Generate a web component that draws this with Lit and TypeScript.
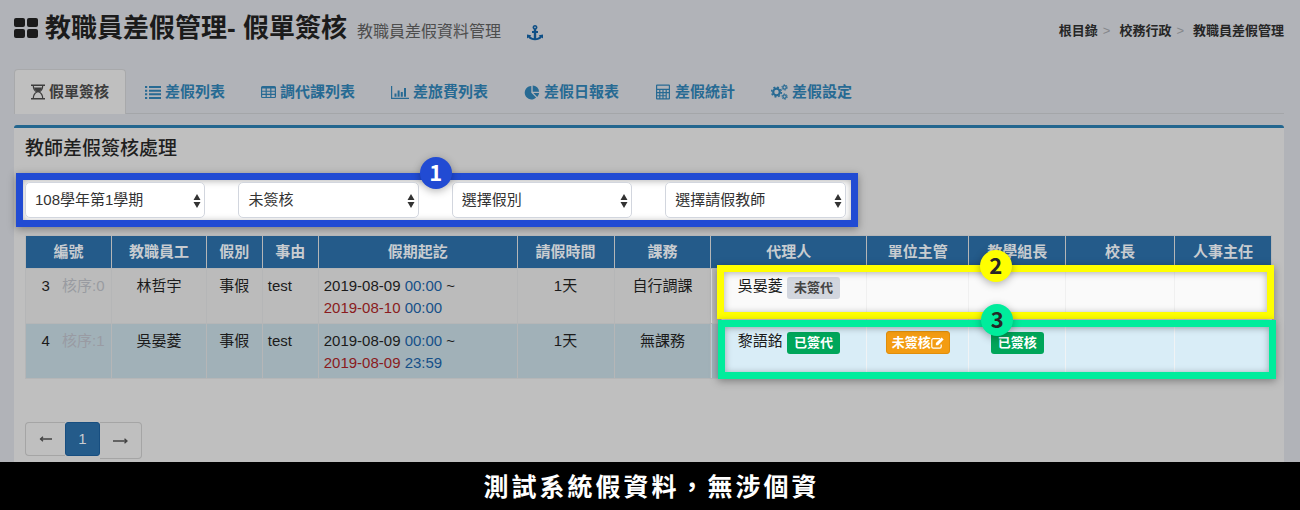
import { LitElement, html, css, svg } from "lit";
import { customElement, property } from "lit/decorators.js";

const icons: Record<string, { w: number; h: number; body: unknown }> = {
  grid: {
    w: 24, h: 20,
    body: svg`<rect x="0" y="0" width="11" height="9" rx="2"/><rect x="13" y="0" width="11" height="9" rx="2"/><rect x="0" y="11" width="11" height="9" rx="2"/><rect x="13" y="11" width="11" height="9" rx="2"/>`,
  },
  anchor: {
    w: 16, h: 16,
    body: svg`<path fill-rule="evenodd" d="M8 0a2.4 2.4 0 0 1 1.2 4.5V6H11v1.9H9.2v5.3c1.5-.2 2.8-.9 3.5-1.9l-1-1.1 4.3-.8v4.1l-1.3-1.1C13.300 14.100 10.800 15.200 8 15.200S2.700 14.100 1.300 12.400L0 13.500V9.400l4.300.8-1 1.100c.7 1 2 1.700 3.500 1.900V7.900H5V6h1.800V4.500A2.400 2.400 0 0 1 8 0zm0 1.600a.8.8 0 1 0 0 1.600.8.8 0 0 0 0-1.600z"/>`,
  },
  hourglass: {
    w: 14, h: 16,
    body: svg`<path d="M0 .5h14v1.500H0zM0 14h14v1.500H0z"/><path d="M2.300 1.500C2.300 5 4 7 5.800 8 4 9 2.300 11 2.300 14.500M11.700 1.500C11.700 5 10 7 8.200 8 10 9 11.700 11 11.700 14.500" fill="none" stroke="currentColor" stroke-width="1.200"/><path d="M3 3.500h8C10.500 5.500 9 7.300 7.600 8.200H6.400C5 7.300 3.500 5.500 3 3.500z"/>`,
  },
  list: {
    w: 16, h: 14,
    body: svg`<path d="M0 1h2.200v2H0zM4 1h12v2H4zM0 4.700h2.200v2H0zM4 4.700h12v2H4zM0 8.300h2.200v2H0zM4 8.300h12v2H4zM0 12h2.200v2H0zM4 12h12v2H4z"/>`,
  },
  table: {
    w: 15, h: 14,
    body: svg`<path fill-rule="evenodd" d="M1.500 1h12A1.500 1.500 0 0 1 15 2.500v9a1.500 1.500 0 0 1-1.500 1.500h-12A1.500 1.500 0 0 1 0 11.500v-9A1.500 1.500 0 0 1 1.500 1zM1.200 3.500v2.200h3.400V3.500zm4.600 0v2.200h3.400V3.500zm4.600 0v2.200h3.400V3.500zM1.200 6.800v2h3.400v-2zm4.600 0v2h3.400v-2zm4.600 0v2h3.400v-2zM1.200 9.900v2h3.400v-2zm4.600 0v2h3.400v-2zm4.600 0v2h3.400v-2z"/>`,
  },
  chart: {
    w: 18, h: 14,
    body: svg`<path d="M0 1h1.200v11.800H18V14H0zM3.500 8.500h2v3.300h-2zM6.600 5.500h2v6.300h-2zM9.800 7h2v4.800h-2zM13 3h2v8.800h-2z"/>`,
  },
  pie: {
    w: 16, h: 15,
    body: svg`<path d="M7.300 1v6.700l4.800 4.800A6.700 6.700 0 1 1 7.300 1zM8.700.500A6.500 6.500 0 0 1 15.100 6.700H8.700zM9.400 8h5.700a6.700 6.700 0 0 1-1.900 3.900z"/>`,
  },
  calc: {
    w: 16, h: 16,
    body: svg`<path fill-rule="evenodd" d="M2 .500h12a1 1 0 0 1 1 1v13a1 1 0 0 1-1 1H2a1 1 0 0 1-1-1v-13a1 1 0 0 1 1-1zM2.200 1.700v3h11.600v-3zm0 4.300v2h2V6zm3.200 0v2h2V6zm3.200 0v2h2V6zm3.200 0v2h2V6zM2.200 9.200v2h2v-2zm3.200 0v2h2v-2zm3.200 0v2h2v-2zM2.200 12.300v2h2v-2zm3.200 0v2h2v-2zm3.200 0v2h2v-2zm3.200-3.100v5.100h2V9.200z"/>`,
  },
  cogs: {
    w: 17, h: 16,
    body: svg`<g fill="none" stroke="currentColor"><circle cx="5.500" cy="8" r="3.300" stroke-width="2.200"/><circle cx="5.500" cy="8" r="4.900" stroke-width="1.500" stroke-dasharray="1.920 1.928"/><circle cx="13.600" cy="3.400" r="1.700" stroke-width="1.300"/><circle cx="13.600" cy="3.400" r="2.700" stroke-width="1" stroke-dasharray="1.400 1.427"/><circle cx="13.600" cy="12.600" r="1.700" stroke-width="1.300"/><circle cx="13.600" cy="12.600" r="2.700" stroke-width="1" stroke-dasharray="1.400 1.427"/></g>`,
  },
  edit: {
    w: 13, h: 12,
    body: svg`<path d="M9 1.700H2.200A1.400 1.400 0 0 0 .8 3.100v6.600a1.400 1.400 0 0 0 1.400 1.400h6.600a1.400 1.400 0 0 0 1.400-1.400V7.500" fill="none" stroke="currentColor" stroke-width="1.200"/><path d="M10.600.500l2 2L7 8.200H4.900V6.100z"/>`,
  },
  updown: {
    w: 8, h: 14,
    body: svg`<path d="M4 0l3.500 6H.500zM4 14L.500 8h7z"/>`,
  },
  left: {
    w: 14, h: 8,
    body: svg`<path d="M1 4H13M4 1.700L1.500 4 4 6.300" fill="none" stroke="currentColor" stroke-width="1.300"/>`,
  },
  right: {
    w: 16, h: 8,
    body: svg`<path d="M0 4h14M11.500 1.700L14 4l-2.500 2.300" fill="none" stroke="currentColor" stroke-width="1.300"/>`,
  },
};

@customElement("ui-icon")
export class UiIcon extends LitElement {
  @property() name = "grid";

  static styles = css`
    :host { display: inline-flex; flex: none; }
    svg { display: block; fill: currentColor; }
  `;

  render() {
    const i = icons[this.name];
    return html`<svg width=${i.w} height=${i.h} viewBox="0 0 ${i.w} ${i.h}" aria-hidden="true">${i.body}</svg>`;
  }
}

const tabs = [
  ["hourglass", "假單簽核"],
  ["list", "差假列表"],
  ["table", "調代課列表"],
  ["chart", "差旅費列表"],
  ["pie", "差假日報表"],
  ["calc", "差假統計"],
  ["cogs", "差假設定"],
];

const filters = [
  ["學期", "108學年第1學期"],
  ["簽核狀態", "未簽核"],
  ["假別", "選擇假別"],
  ["請假教師", "選擇請假教師"],
];

const columns: [string, number][] = [
  ["編號", 86], ["教職員工", 95], ["假別", 56], ["事由", 56],
  ["假期起訖", 199], ["請假時間", 97], ["課務", 97], ["代理人", 156],
  ["單位主管", 102], ["教學組長", 97], ["校長", 109], ["人事主任", 97],
];
const total = columns.reduce((sum, c) => sum + c[1], 0);

const rows = [
  {
    id: 3, seq: 0, name: "林哲宇", from: ["2019-08-09", "00:00"], to: ["2019-08-10", "00:00"],
    duty: "自行調課", agent: "吳晏菱", agentDone: false, chief: false, lead: false,
  },
  {
    id: 4, seq: 1, name: "吳晏菱", from: ["2019-08-09", "00:00"], to: ["2019-08-09", "23:59"],
    duty: "無課務", agent: "黎語銘", agentDone: true, chief: true, lead: true,
  },
];

@customElement("app-root")
export class AppRoot extends LitElement {
  static styles = css`
    :host {
      display: flex;
      flex-direction: column;
      min-height: 100vh;
      background: #b1b3b8;
      color: #1b1b1b;
      font: 15px/22px "Liberation Sans", "Noto Sans CJK TC", sans-serif;
    }
    *, *::before, *::after { box-sizing: border-box; }
    a { color: inherit; text-decoration: none; }
    button { font: inherit; cursor: pointer; }

    .page { flex: 1; display: flex; flex-direction: column; padding: 8px 16px 0 14px; }
    .top { display: flex; justify-content: space-between; align-items: center; height: 40px; margin-bottom: 21px; }
    .heading { display: flex; align-items: center; }
    h1 { margin: 0 10px 0 7px; font-size: 26px; line-height: 40px; font-weight: 700; }
    .sub { font-size: 16px; line-height: 24px; color: #4d4d4d; padding-top: 8px; }
    .anchor { display: flex; margin-left: 26px; padding-top: 10px; color: #0f4f86; }
    .crumbs { display: flex; margin: 0; padding: 6px 0 0; list-style: none; font-size: 13px; font-weight: 700; color: #262626; }
    .crumbs li + li::before { content: ">"; color: #85878b; font-weight: 400; margin: 0 9px 0 5px; }

    .tabs { display: flex; gap: 2px; border-bottom: 1px solid #a4a6a9; color: #276a93; font-weight: 700; }
    .tab {
      display: flex; align-items: center; gap: 4px; height: 45px; padding: 0 16px;
      border: 1px solid transparent; border-bottom: 0; border-radius: 4px 4px 0 0; margin-bottom: -1px;
    }
    .tab.on { background: #bfbfbf; border-color: #a8a9ab; color: #3d3d3d; }

    .panel {
      flex: 1; margin-top: 11px; padding: 9px 12px 2px 11px;
      background: #bfbfbf; border-top: 3px solid #23668f; border-radius: 3px 3px 0 0;
    }
    h2 { margin: 0 0 12px; font-size: 19px; line-height: 24px; font-weight: 500; color: #1f1f1f; }

    .callout { border: 7px solid; box-shadow: 0 2px 8px rgba(0, 0, 0, .35), inset 0 1px 7px rgba(0, 0, 0, .3); }
    .blue { color: #214bd3; }
    .yellow { color: #ff0; }
    .green { color: #00ec9c; }
    .num {
      position: absolute; width: 32px; height: 32px; border-radius: 50%; background: currentColor;
      font: 700 22px/28px "Noto Sans CJK TC", sans-serif; text-align: center;
      box-shadow: 0 2px 8px rgba(0, 0, 0, .3);
    }
    .num span { color: #262626; }
    .blue .num span { color: #fff; }

    .filters {
      position: relative; display: grid; grid-template-columns: repeat(4, 1fr); gap: 33px;
      width: 67.5%; margin: 0 0 8px -9px; padding: 2px 5px 2px 2px; background: #fff;
    }
    .filters .num { left: calc(50% - 17px); top: -23px; }
    .field { position: relative; display: block; }
    .field ui-icon { position: absolute; right: 4px; top: 12px; pointer-events: none; color: #333; }
    select {
      appearance: none; display: block; width: 100%; height: 36px; padding: 0 16px 0 9px;
      border: 1px solid #d2d6de; border-radius: 5px; background: #fff; color: #333; font: inherit;
    }

    .sheet { position: relative; }
    table { width: 100%; table-layout: fixed; border-collapse: collapse; }
    th, td { border: 1px solid #b5b6b7; padding: 5px; text-align: center; vertical-align: top; }
    th { height: 33px; background: #245b8a; color: #c8ccd0; font-weight: 700; }
    td { background: #bbb; height: 55px; padding: 6px 5px 4px; white-space: nowrap; }
    .even td { background: #a1b1b8; }
    .id { padding-left: 14px; }
    .text { text-align: left; }
    .seq { color: #999ba1; margin-left: 8px; }
    .even .seq { color: #999ba3; }
    .end { color: #8a1b20; }
    .time { color: #165088; }
    td.open { background: #fafafa; border-left-color: #f0f0f0; border-right-color: #f0f0f0; }
    .even td.open { background: #d9edf7; border-left-color: #f0f3f5; border-right-color: #f0f3f5; }
    td.agent { background: linear-gradient(90deg, #bbb 10px, #fafafa 10px); }
    .even td.agent { background: linear-gradient(90deg, #a1b1b8 10px, #d9edf7 10px); }
    .badge {
      display: inline-block; padding: 0 7px; border: 0; border-radius: 3px; vertical-align: top; margin-top: 2px;
      font-size: 13px; line-height: 22px; font-weight: 700; background: #d2d6de; color: #444;
    }
    .badge.done { background: #00a65a; color: #fff; }
    .badge.act {
      display: inline-flex; align-items: center; padding: 0 5px; border: 1px solid #e08e0b;
      background: #f39c12; color: #fff; line-height: 21px; margin-top: 1px;
    }
    .mark { position: absolute; left: calc(55.6% - 1px); right: -2px; top: 30px; height: 54px; pointer-events: none; }
    .mark.green { left: 55.6%; right: -4px; top: 85px; height: 59px; }
    .mark .num { left: calc(50% - 16px); top: -22px; }
    .mark.green .num { top: -23px; }

    .pager { display: flex; align-items: flex-start; margin-top: 43px; }
    .pager button {
      display: flex; align-items: center; justify-content: center; height: 34px; padding: 0;
      border: 1px solid #a5a5a5; background: #bfbfbf; color: #444;
    }
    .pager .prev { border-radius: 4px 0 0 4px; border-right: 0; width: 40px; }
    .pager .now { width: 35px; border-color: #174e80; border-radius: 3px; background: #245b8a; color: #c8ccd0; }
    .pager .next { width: 42px; height: 37px; border-left: 0; border-radius: 0 4px 4px 0; padding-top: 1px; }

    .caption {
      margin: 0; padding-left: 3px; background: #000; color: #fff; text-align: center;
      font: 700 25px/46px "Noto Sans CJK TC", sans-serif; letter-spacing: 3px; height: 48px;
    }
  `;

  render() {
    return html`
      <main class="page">
        <header class="top">
          <div class="heading">
            <ui-icon name="grid"></ui-icon>
            <h1>教職員差假管理- 假單簽核</h1>
            <span class="sub">教職員差假資料管理</span>
            <a class="anchor" href="#top" aria-label="錨點"><ui-icon name="anchor"></ui-icon></a>
          </div>
          <ol class="crumbs">
            <li><a href="#root">根目錄</a></li>
            <li><a href="#office">校務行政</a></li>
            <li><a href="#leave">教職員差假管理</a></li>
          </ol>
        </header>
        <nav class="tabs">
          ${tabs.map(([icon, label], i) => html`<a class="tab ${i === 0 ? "on" : ""}" href="#tab${i}"><ui-icon name=${icon}></ui-icon>${label}</a>`)}
        </nav>
        <section class="panel">
          <h2>教師差假簽核處理</h2>
          <div class="filters callout blue">
            ${filters.map(([label, value]) => html`<label class="field"><select aria-label=${label}><option>${value}</option></select><ui-icon name="updown"></ui-icon></label>`)}
            <div class="num"><span>1</span></div>
          </div>
          <div class="sheet">
            <table>
              <colgroup>${columns.map(([, w]) => html`<col style="width:${(w / total) * 100}%">`)}</colgroup>
              <thead><tr>${columns.map(([label]) => html`<th scope="col">${label}</th>`)}</tr></thead>
              <tbody>
                ${rows.map((r) => html`<tr class=${r.seq % 2 ? "even" : ""}>
                  <td class="id">${r.id} <span class="seq">核序:${r.seq}</span></td>
                  <td>${r.name}</td>
                  <td>事假</td>
                  <td class="text">test</td>
                  <td class="text">${r.from[0]} <span class="time">${r.from[1]}</span> ~<br><span class="end">${r.to[0]}</span> <span class="time">${r.to[1]}</span></td>
                  <td>1天</td>
                  <td>${r.duty}</td>
                  <td class="open agent">${r.agent} <span class="badge ${r.agentDone ? "done" : ""}">${r.agentDone ? "已簽代" : "未簽代"}</span></td>
                  <td class="open">${r.chief ? html`<button class="badge act">未簽核<ui-icon name="edit"></ui-icon></button>` : ""}</td>
                  <td class="open">${r.lead ? html`<span class="badge done">已簽核</span>` : ""}</td>
                  <td class="open"></td>
                  <td class="open"></td>
                </tr>`)}
              </tbody>
            </table>
            <div class="mark callout yellow"><div class="num"><span>2</span></div></div>
            <div class="mark callout green"><div class="num"><span>3</span></div></div>
          </div>
          <nav class="pager" aria-label="分頁">
            <button class="prev" aria-label="上一頁"><ui-icon name="left"></ui-icon></button>
            <button class="now">1</button>
            <button class="next" aria-label="下一頁"><ui-icon name="right"></ui-icon></button>
          </nav>
        </section>
      </main>
      <p class="caption">測試系統假資料，無涉個資</p>
    `;
  }
}
